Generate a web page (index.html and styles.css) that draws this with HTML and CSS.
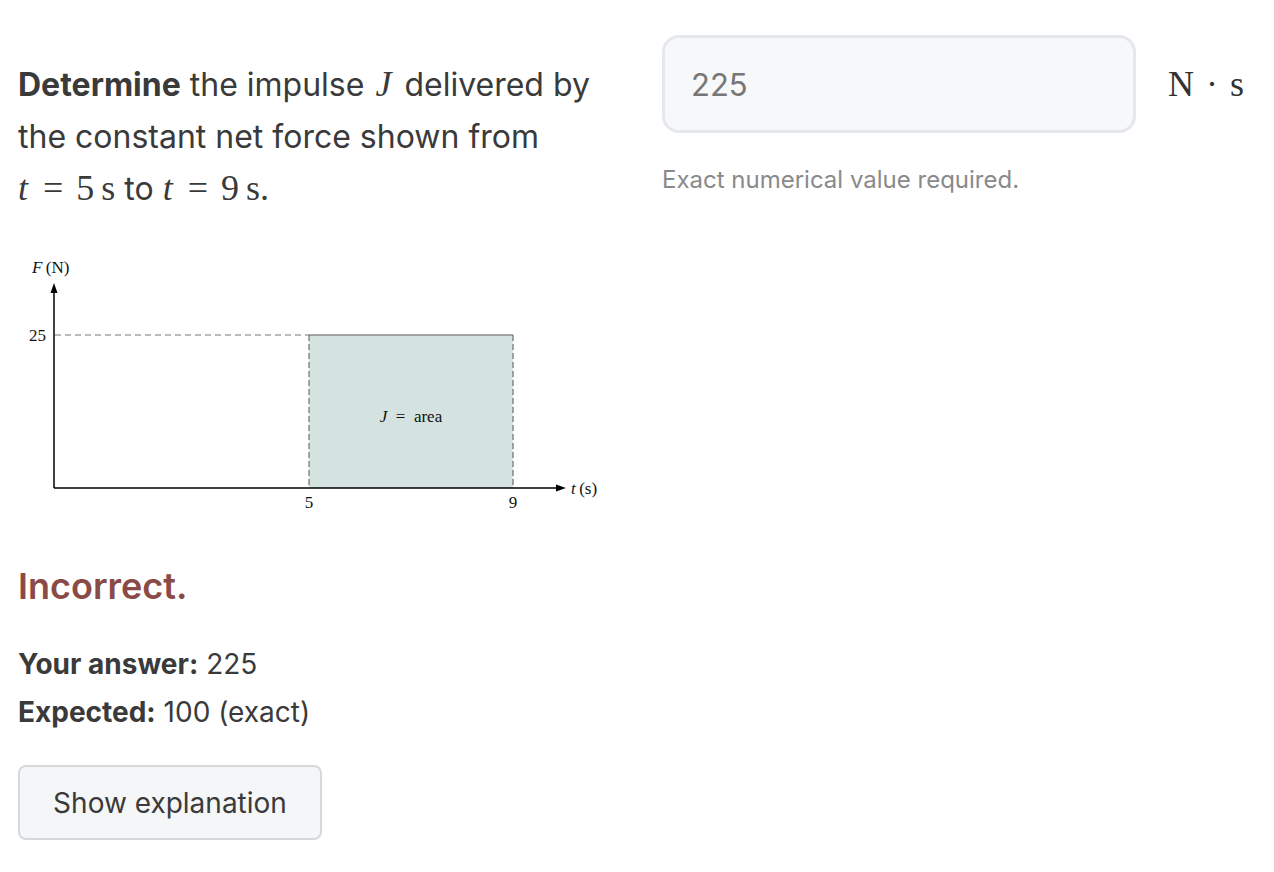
FILE: index.html
```html
<!DOCTYPE html>
<html>
<head>
<meta charset="utf-8">
<link rel="stylesheet" href="styles.css">
</head>
<body>
<div class="page">
  <div class="left">
    <p class="question"><strong>Determine</strong> the impulse <span class="m mj"><i>J</i></span> delivered by the constant net force shown from <span class="nw"><span class="m"><i>t</i><span class="op">=</span>5<span class="th"></span>s</span> to <span class="m"><i>t</i><span class="op">=</span>9<span class="th"></span>s.</span></span></p>
    <svg class="chart" width="600" height="290" viewBox="18 245 600 290">
      <rect x="309" y="335" width="204" height="153" fill="#d4e3df"/>
      <line x1="309" y1="335" x2="513" y2="335" stroke="#8a8a8a" stroke-width="1.5"/>
      <line x1="55" y1="335" x2="309" y2="335" stroke="#777" stroke-width="1" stroke-dasharray="6 4"/>
      <line x1="309" y1="335" x2="309" y2="488" stroke="#555" stroke-width="1" stroke-dasharray="6 3"/>
      <line x1="513" y1="335" x2="513" y2="488" stroke="#555" stroke-width="1" stroke-dasharray="6 3"/>
      <line x1="54" y1="488" x2="54" y2="291" stroke="#000" stroke-width="1.5"/>
      <polygon points="54,283 50.5,293 57.5,293" fill="#000"/>
      <line x1="54" y1="488" x2="557" y2="488" stroke="#000" stroke-width="1.5"/>
      <polygon points="566,488 556,484.5 556,491.5" fill="#000"/>
      <text class="lbl" x="29" y="341">25</text>
      <text class="lbl" x="309" y="508" text-anchor="middle">5</text>
      <text class="lbl" x="513" y="508" text-anchor="middle">9</text>
      <text class="lbl" x="571" y="494"><tspan font-style="italic">t</tspan>&#8201;(s)</text>
      <text class="lbl" x="32" y="273"><tspan font-style="italic">F</tspan>&#8201;(N)</text>
      <text class="lbl" x="411" y="422" text-anchor="middle"><tspan font-style="italic">J</tspan>&#8194;=&#8194;area</text>
    </svg>
    <div class="verdict">Incorrect.</div>
    <p class="line first"><strong>Your answer:</strong> 225</p>
    <p class="line"><strong>Expected:</strong> 100 (exact)</p>
    <button class="btn">Show explanation</button>
  </div>
  <div class="right">
    <div class="answer-row">
      <div class="input">225</div>
      <span class="unit">N <span class="dot">&#183;</span> s</span>
    </div>
    <p class="hint">Exact numerical value required.</p>
  </div>
</div>
</body>
</html>
```
FILE: styles.css
```css
* { box-sizing: border-box; }
html, body { margin: 0; padding: 0; background: #fff; }
body { font-family: Inter, "Noto Sans", sans-serif; color: #3a3a3a; }
.page { display: flex; gap: 42px; padding: 35px 0 0 18px; }
.left { width: 602px; flex: none; display: flex; flex-direction: column; align-items: flex-start; }
.question { margin: 24px 0 0; font-size: 32px; line-height: 52px; }
.question strong { font-weight: 700; }
.nw { white-space: nowrap; }
.m { font-family: "Liberation Serif", "DejaVu Serif", serif; font-size: 36px; line-height: 1; white-space: nowrap; }
.m i { padding-right: 2px; }
.mj { padding: 0 2px; }
.m .op { padding: 0 13px; }
.m .th { display: inline-block; width: 7px; }
.chart { display: block; margin-top: 30px; }
.lbl { font-family: "Liberation Serif", "DejaVu Serif", serif; font-size: 17px; fill: #111; }
.verdict { margin-top: 29px; font-size: 36px; font-weight: 600; color: #8a4a46; line-height: 44px; }
.line { margin: 0; font-size: 28px; line-height: 48px; }
.line.first { margin-top: 32px; }
.line strong { font-weight: 700; }
.btn { margin-top: 29px; width: 304px; height: 75px; background: #f5f6f8; border: 2px solid #d6d8dc; border-radius: 8px; font-family: Inter, "Noto Sans", sans-serif; font-size: 28px; color: #3a3a3a; }
.right { width: 590px; }
.answer-row { display: flex; align-items: center; }
.input { width: 474px; height: 98px; border: 3px solid #e4e7eb; border-radius: 17px; background: #f7f8fa; padding-left: 26px; display: flex; align-items: center; font-size: 31px; color: #767676; }
.unit { margin-left: 32px; font-family: "Liberation Serif", "DejaVu Serif", serif; font-size: 36px; color: #333; }
.unit .dot { padding: 0 3px; }
.hint { margin: 32px 0 0; font-size: 24px; color: #8a8a8a; }
```
